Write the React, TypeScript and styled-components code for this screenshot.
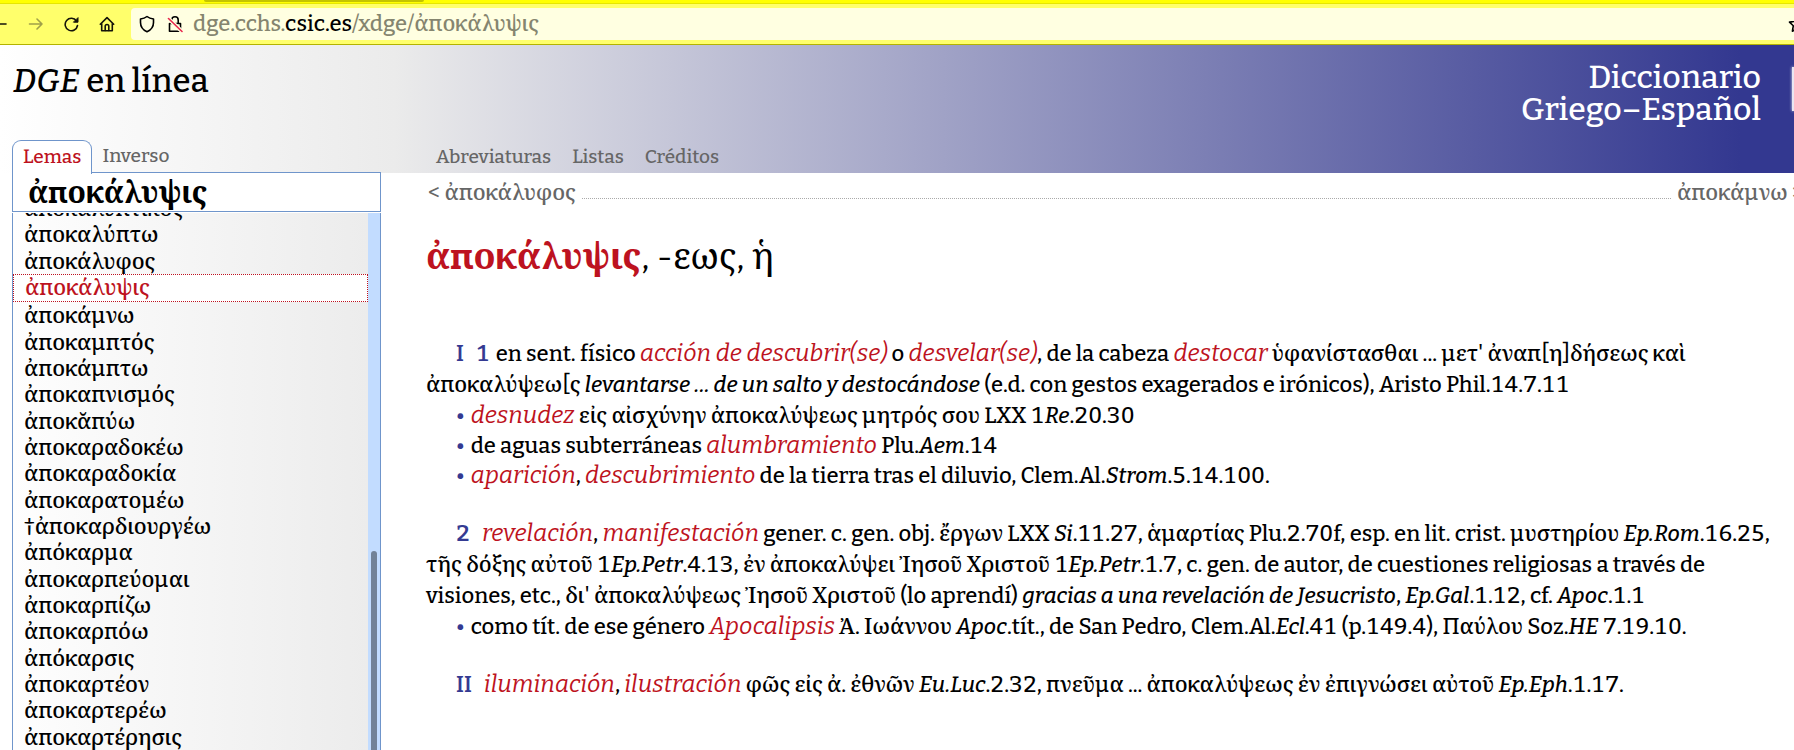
import React, { useLayoutEffect, useRef } from "react";
import styled, { createGlobalStyle } from "styled-components";

const fontStack = '"Bitter", "Noto Serif", "DejaVu Serif Condensed", "DejaVu Serif", serif';
const red = "#bd1220";
const blue = "#343a92";
const grey = "#666666";
const line = "#6f95cb";

const GlobalStyle = createGlobalStyle`
  *, *::before, *::after { box-sizing: border-box; }
  body {
    margin: 0;
    background: #ffffff;
    color: #000000;
    font-family: ${fontStack};
    font-size: 22px;
    font-weight: 500;
    font-variant-numeric: tabular-nums;
  }
  a { color: inherit; text-decoration: none; }
`;

const Window = styled.div`
  display: flex;
  flex-direction: column;
  height: 100vh;
  overflow: hidden;
`;

const TabStrip = styled.div`
  flex: none;
  height: 4px;
  padding-left: 204px;
  background: #ffff00;
  border-bottom: 1px solid #e6e600;
`;

const ActiveTabEdge = styled.div`
  width: 220px;
  height: 2px;
  border-radius: 0 0 4px 4px;
  background: #c4c400;
`;

const Toolbar = styled.div`
  flex: none;
  display: flex;
  align-items: center;
  gap: 20px;
  height: 41px;
  background: #ffff6b;
  border-bottom: 1px solid #b3b300;
`;

const ToolButton = styled.button<{ $dim?: boolean }>`
  display: flex;
  flex: none;
  padding: 0;
  border: 0;
  background: none;
  color: ${(p) => (p.$dim ? "#a0a04a" : "#15140a")};
`;

const AddressBar = styled.div`
  flex: 1;
  display: flex;
  align-items: center;
  gap: 12px;
  min-width: 0;
  height: 32px;
  margin-left: -4px;
  padding-left: 8px;
  border-radius: 4px 0 0 4px;
  background: #ffffe1;
  overflow: hidden;
`;

const Address = styled.span`
  flex: 1;
  min-width: 0;
  margin-left: -2px;
  overflow: hidden;
  color: #85856f;
  line-height: 34px;
  white-space: nowrap;

  strong {
    color: #000000;
    font-weight: 500;
  }
`;

const Star = styled.button`
  flex: none;
  display: flex;
  width: 6px;
  padding: 0;
  border: 0;
  background: none;
  overflow: hidden;
`;

const Banner = styled.header`
  flex: none;
  display: flex;
  flex-direction: column;
  justify-content: space-between;
  height: 128px;
  background: linear-gradient(to right, #ffffff, #ebebeb 22%, #333890 97%);
`;

const Titles = styled.div`
  display: flex;
  justify-content: space-between;
  align-items: flex-start;
  padding: 16px 0 0 13px;
  font-size: 32px;
  line-height: 32px;
`;

const SiteName = styled.h1`
  flex: 1;
  margin: 0;
  padding-top: 4px;
  font-size: 33px;
  font-weight: 500;
`;

const FullName = styled.div`
  color: #ffffff;
  text-align: right;
`;

const Logo = styled.a`
  flex: none;
  width: 2px;
  height: 44px;
  margin: 6px 0 0 31px;
  background: #e9e6f2;
  box-shadow: 0 0 3px #ffffff;
`;

const Menus = styled.div`
  display: flex;
  align-items: flex-end;
  font-size: 19px;
  line-height: 32px;
`;

const IndexTabs = styled.nav`
  display: flex;
  gap: 10px;
  width: 415px;
  padding-left: 12px;
  color: ${grey};
`;

const IndexTab = styled.a<{ $active?: boolean }>`
  height: 33px;
  ${(p) =>
    p.$active &&
    `
    position: relative;
    z-index: 1;
    height: 34px;
    margin-bottom: -1px;
    padding: 0 10px;
    color: ${red};
    background: #ffffff;
    border: 1px solid ${line};
    border-bottom: 0;
    border-radius: 9px 9px 0 0;
  `}
`;

const SiteMenu = styled.nav`
  display: flex;
  gap: 21px;
  padding-left: 21px;
  color: ${grey};
`;

const Columns = styled.div`
  flex: 1;
  display: flex;
  min-height: 0;
`;

const Sidebar = styled.aside`
  flex: none;
  display: flex;
  flex-direction: column;
  gap: 1px;
  width: 369px;
  margin: -1px 0 0 12px;
`;

const Search = styled.input`
  flex: none;
  width: 100%;
  height: 40px;
  margin: 0;
  padding: 0 15px 2px;
  border: 1px solid ${line};
  border-radius: 0;
  outline: 0;
  background: #ffffff;
  color: #000000;
  font-family: inherit;
  font-size: 30px;
  font-weight: 700;
`;

const ListFrame = styled.div`
  flex: 1;
  display: flex;
  min-height: 0;
  border: 1px solid ${line};
  border-width: 0 1px;
`;

const ListPane = styled.div`
  flex: 1;
  min-width: 0;
  overflow: hidden;
  background: linear-gradient(to right, #fefefe, #ececec);
`;

const Lemmas = styled.ul`
  display: flex;
  flex-direction: column;
  min-height: calc(100% + 18px);
  margin: 0;
  padding: 0;
  list-style: none;
  overflow: hidden;
`;

const Lemma = styled.li<{ $active?: boolean }>`
  flex: 1 0 ${(p) => (p.$active ? 28 : 26)}px;
  min-height: 0;
  padding-left: 11px;
  line-height: 28px;
  ${(p) =>
    p.$active &&
    `
    background: #ffffff;
    border: 1px dotted ${red};
    color: ${red};
    line-height: 26px;
  `}
`;

const ScrollTrack = styled.div`
  flex: none;
  width: 12px;
  padding: 338px 3px 0;
  background: #c2dcff;
`;

const ScrollThumb = styled.div`
  height: 100%;
  border-radius: 3px 3px 0 0;
  background: #728297;
`;

const Main = styled.main`
  flex: 1;
  min-width: 0;
  padding-left: 45px;
  overflow: hidden;
`;

const Neighbours = styled.nav`
  display: flex;
  gap: 6px;
  height: 40px;
  margin-right: -10px;
  padding-left: 2px;
  color: ${grey};
  line-height: 40px;
  white-space: nowrap;

  &::before {
    content: "";
    order: 1;
    flex: 1;
    height: 26px;
    border-bottom: 1px dotted #aaaaaa;
  }
`;

const Neighbour = styled.a<{ $last?: boolean }>`
  order: ${(p) => (p.$last ? 2 : 0)};
`;

const Headword = styled.h2`
  margin: 19px 0 0;
  font-size: 36px;
  font-weight: 400;
  line-height: 50px;

  strong {
    color: ${red};
    font-weight: 700;
  }
`;

const Article = styled.article`
  padding-top: 56px;
`;

const Sense = styled.section`
  margin-bottom: 27px;
`;

const Definition = styled.p`
  margin: 0;
  line-height: 31px;
  text-indent: 30px;
`;

const Uses = styled.ul`
  margin: 0;
  padding: 1px 0 0 30px;
  list-style: none;
`;

const Use = styled.li`
  line-height: 30px;

  &::before {
    content: "•";
    margin-right: 6px;
    color: ${blue};
  }
`;

const Mark = styled.b<{ $tight?: boolean }>`
  margin-right: ${(p) => (p.$tight ? 6 : 12)}px;
  color: ${blue};
  font-weight: 600;
`;

const Gloss = styled.em`
  color: ${red};
  font-size: 24px;
  font-weight: 400;
  line-height: 1;
`;

const Icon = styled.svg`
  display: block;
  flex: none;
  fill: none;
  stroke: currentColor;
  stroke-width: 1.6;
  stroke-linecap: round;
  stroke-linejoin: round;
`;

const lemmas = [
  "ἀποκαλυπτικός",
  "ἀποκαλύπτω",
  "ἀποκάλυφος",
  "ἀποκάλυψις",
  "ἀποκάμνω",
  "ἀποκαμπτός",
  "ἀποκάμπτω",
  "ἀποκαπνισμός",
  "ἀποκᾰπύω",
  "ἀποκαραδοκέω",
  "ἀποκαραδοκία",
  "ἀποκαρατομέω",
  "†ἀποκαρδιουργέω",
  "ἀπόκαρμα",
  "ἀποκαρπεύομαι",
  "ἀποκαρπίζω",
  "ἀποκαρπόω",
  "ἀπόκαρσις",
  "ἀποκαρτέον",
  "ἀποκαρτερέω",
  "ἀποκαρτέρησις",
];

const current = "ἀποκάλυψις";

function LemmaList() {
  const pane = useRef<HTMLDivElement>(null);
  useLayoutEffect(() => {
    if (pane.current) pane.current.scrollTop = pane.current.scrollHeight;
  }, []);
  return (
    <ListFrame>
      <ListPane ref={pane}>
        <Lemmas>
          {lemmas.map((lemma) => (
            <Lemma key={lemma} $active={lemma === current}>
              <a href={`#${lemma}`}>{lemma}</a>
            </Lemma>
          ))}
        </Lemmas>
      </ListPane>
      <ScrollTrack>
        <ScrollThumb />
      </ScrollTrack>
    </ListFrame>
  );
}

function BrowserBar() {
  return (
    <>
      <TabStrip>
        <ActiveTabEdge />
      </TabStrip>
      <Toolbar>
        <ToolButton aria-label="Atrás">
          <Icon width="7" height="16" viewBox="0 0 7 16">
            <path d="M-7 8H6" />
          </Icon>
        </ToolButton>
        <ToolButton aria-label="Adelante" $dim>
          <Icon width="16" height="16" viewBox="0 0 16 16">
            <path d="M2.500 8h12.500M10 3l5 5-5 5" />
          </Icon>
        </ToolButton>
        <ToolButton aria-label="Recargar">
          <Icon width="16" height="16" viewBox="0 0 16 16">
            <path d="M13.500 5A6.200 6.200 0 1 0 14.500 9.500" />
            <path d="M15 2v4.200h-4.200z" fill="currentColor" strokeWidth="1" />
          </Icon>
        </ToolButton>
        <ToolButton aria-label="Inicio">
          <Icon width="16" height="16" viewBox="0 0 16 16">
            <path d="M1.300 8.200 8 1.600l6.700 6.600M2.700 7.500v7.200h10.600V7.500" />
            <path d="M6.200 14.500v-4.200a1.800 1.800 0 0 1 3.600 0v4.200" />
          </Icon>
        </ToolButton>
        <AddressBar>
          <Icon width="16" height="18" viewBox="0 0 16 18">
            <path d="M8 1.500c2 1.600 4 2.200 6.500 2.500v3.500c0 4.200-2.500 7.500-6.500 9.200C4 15 1.500 11.700 1.500 7.500V4C4 3.700 6 3.100 8 1.500z" />
          </Icon>
          <Icon width="16" height="18" viewBox="0 0 16 18">
            <path d="M2.500 8.500h11v7.800h-11zM4.800 8.300V5a3.200 3.200 0 0 1 6.400 0v3.300" />
            <path d="M1.500 3.500l13.500 13" stroke="#ffffe1" strokeWidth="4" />
            <path d="M1.500 3.500l13.500 13" stroke="#e8264c" />
          </Icon>
          <Address>
            dge.cchs.<strong>csic.es</strong>/xdge/ἀποκάλυψις
          </Address>
          <Star aria-label="Guardar en marcadores">
            <Icon width="18" height="18" viewBox="0 0 18 18">
              <path d="M9 1.500l2.300 4.900 5.200.7-3.800 3.700.9 5.400L9 13.700l-4.600 2.500.9-5.400L1.500 7.100l5.200-.7z" />
            </Icon>
          </Star>
        </AddressBar>
      </Toolbar>
    </>
  );
}

function SiteHeader() {
  return (
    <Banner>
      <Titles>
        <SiteName>
          <i>DGE</i> en línea
        </SiteName>
        <FullName>
          Diccionario
          <br />
          Griego–Español
        </FullName>
        <Logo href="#inicio" aria-label="Inicio del sitio" />
      </Titles>
      <Menus>
        <IndexTabs>
          <IndexTab href="#lemas" $active>
            Lemas
          </IndexTab>
          <IndexTab href="#inverso">Inverso</IndexTab>
        </IndexTabs>
        <SiteMenu>
          <a href="#abreviaturas">Abreviaturas</a>
          <a href="#listas">Listas</a>
          <a href="#creditos">Créditos</a>
        </SiteMenu>
      </Menus>
    </Banner>
  );
}

function Entry() {
  return (
    <Article>
      <Sense>
        <Definition>
          <Mark>I</Mark>
          <Mark $tight>1</Mark>
          en sent. físico <Gloss>acción de descubrir(se)</Gloss> o <Gloss>desvelar(se)</Gloss>, de la
          cabeza <Gloss>destocar</Gloss> ὑφανίστασθαι ... μετ' ἀναπ[η]δήσεως καὶ
          <br />
          ἀποκαλύψεω[ς <i>levantarse ... de un salto y destocándose</i> (e.d. con gestos exagerados e
          irónicos), Aristo Phil.14.7.11
        </Definition>
        <Uses>
          <Use>
            <Gloss>desnudez</Gloss> εἰς αἰσχύνην ἀποκαλύψεως μητρός σου LXX 1<i>Re</i>.20.30
          </Use>
          <Use>
            de aguas subterráneas <Gloss>alumbramiento</Gloss> Plu.<i>Aem</i>.14
          </Use>
          <Use>
            <Gloss>aparición</Gloss>, <Gloss>descubrimiento</Gloss> de la tierra tras el diluvio,
            Clem.Al.<i>Strom</i>.5.14.100.
          </Use>
        </Uses>
      </Sense>
      <Sense>
        <Definition>
          <Mark>2</Mark>
          <Gloss>revelación</Gloss>, <Gloss>manifestación</Gloss> gener. c. gen. obj. ἔργων LXX{" "}
          <i>Si</i>.11.27, ἁμαρτίας Plu.2.70f, esp. en lit. crist. μυστηρίου <i>Ep.Rom</i>.16.25,
          <br />
          τῆς δόξης αὐτοῦ 1<i>Ep.Petr</i>.4.13, ἐν ἀποκαλύψει Ἰησοῦ Χριστοῦ 1<i>Ep.Petr</i>.1.7, c.
          gen. de autor, de cuestiones religiosas a través de
          <br />
          visiones, etc., δι' ἀποκαλύψεως Ἰησοῦ Χριστοῦ (lo aprendí){" "}
          <i>gracias a una revelación de Jesucristo</i>, <i>Ep.Gal</i>.1.12, cf. <i>Apoc</i>.1.1
        </Definition>
        <Uses>
          <Use>
            como tít. de ese género <Gloss>Apocalipsis</Gloss> Ἀ. Ιωάννου <i>Apoc</i>.tít., de San
            Pedro, Clem.Al.<i>Ecl</i>.41 (p.149.4), Παύλου Soz.<i>HE</i> 7.19.10.
          </Use>
        </Uses>
      </Sense>
      <Sense>
        <Definition>
          <Mark>II</Mark>
          <Gloss>iluminación</Gloss>, <Gloss>ilustración</Gloss> φῶς εἰς ἀ. ἐθνῶν <i>Eu.Luc</i>.2.32,
          πνεῦμα ... ἀποκαλύψεως ἐν ἐπιγνώσει αὐτοῦ <i>Ep.Eph</i>.1.17.
        </Definition>
      </Sense>
    </Article>
  );
}

export default function App() {
  return (
    <Window>
      <GlobalStyle />
      <BrowserBar />
      <SiteHeader />
      <Columns>
        <Sidebar>
          <Search aria-label="Buscar lema" defaultValue={current} />
          <LemmaList />
        </Sidebar>
        <Main>
          <Neighbours>
            <Neighbour href="#ἀποκάλυφος">&lt; ἀποκάλυφος</Neighbour>
            <Neighbour href="#ἀποκάμνω" $last>
              ἀποκάμνω &gt;
            </Neighbour>
          </Neighbours>
          <Headword>
            <strong>{current}</strong>, -εως, ἡ
          </Headword>
          <Entry />
        </Main>
      </Columns>
    </Window>
  );
}
